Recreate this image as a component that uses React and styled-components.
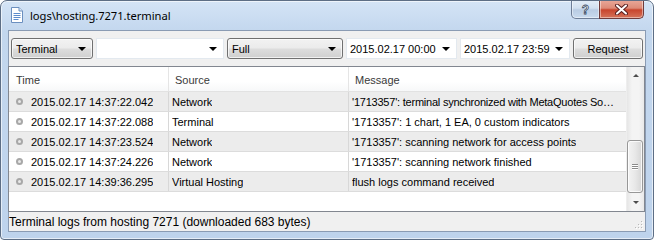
import React from "react";
import styled, { createGlobalStyle } from "styled-components";

const Global = createGlobalStyle`
  html, body { margin: 0; padding: 0; background: #ffffff; }
  body { width: 654px; height: 240px; overflow: hidden; }
`;

const UI = `"Liberation Sans", Arial, sans-serif`;

const Window = styled.div`
  box-sizing: border-box;
  width: 654px;
  height: 240px;
  border: 1px solid #5d6e85;
  border-radius: 7px 7px 4px 4px;
  background: linear-gradient(180deg, #d4e4f6 0px, #c3d7ee 30px, #bed3ec 100%);
  display: flex;
  flex-direction: column;
  overflow: hidden;
  box-shadow: inset 0 0 0 1px rgba(255,255,255,0.6);
`;

const TitleBar = styled.div`
  height: 29px;
  display: flex;
  align-items: flex-start;
  padding-left: 10px;
  padding-right: 9px;
`;

const TitleIcon = styled.svg`
  margin-top: 6px;
  flex: none;
`;

const TitleText = styled.div`
  margin-top: 6px;
  margin-left: 7px;
  font-family: "Noto Sans", "Open Sans", sans-serif;
  font-size: 11.2px;
  line-height: 17px;
  color: #000;
  letter-spacing: -0.05px;
`;

const CaptionButtons = styled.div`
  margin-left: auto;
  display: flex;
  margin-top: -1px;
`;

const CapButton = styled.div`
  box-sizing: border-box;
  width: ${p => p.$w}px;
  height: 19px;
  border: 1px solid ${p => (p.$close ? "#6f3b3b" : "#6d7d96")};
  border-top: none;
  border-radius: ${p => p.$r};
  background: ${p =>
    p.$close
      ? "linear-gradient(180deg, #e9a99a 0%, #dd8b78 45%, #c8452d 55%, #d5735a 100%)"
      : "linear-gradient(180deg, #e4edf7 0%, #d2e0f0 45%, #b9cce3 55%, #c9dbef 100%)"};
  display: flex;
  align-items: center;
  justify-content: center;
  box-shadow: inset 0 0 0 1px rgba(255,255,255,0.45);
  margin-left: ${p => (p.$close ? "-1px" : "0")};
`;

const Client = styled.div`
  flex: 1;
  margin: 0 7px 7px 7px;
  border: 1px solid #8a9bb3;
  background: #f0f0f0;
  display: flex;
  flex-direction: column;
  min-height: 0;
`;

const Toolbar = styled.div`
  display: flex;
  gap: 3px;
  padding: 7px 0 7px 2px;
`;

const Combo = styled.div`
  box-sizing: border-box;
  width: ${p => p.$w}px;
  height: 21px;
  display: flex;
  align-items: center;
  padding: 0 6px 0 ${p => (p.$button ? 4 : 3)}px;
  font-family: ${UI};
  font-size: 11px;
  color: #000;
  border: 1px solid ${p => (p.$button ? "#707070" : "#e3e9ef")};
  border-radius: ${p => (p.$button ? "3px" : "0")};
  background: ${p =>
    p.$button
      ? "linear-gradient(180deg, #f2f2f2 0%, #ebebeb 48%, #dddddd 52%, #cfcfcf 100%)"
      : "#ffffff"};
  box-shadow: ${p => (p.$button ? "inset 0 0 0 1px rgba(255,255,255,0.7)" : "none")};
`;

const ComboText = styled.span`
  flex: 1;
  white-space: nowrap;
  overflow: hidden;
`;

const Arrow = styled.span`
  width: 0;
  height: 0;
  border-left: 4px solid transparent;
  border-right: 4px solid transparent;
  border-top: 4px solid #000;
  flex: none;
`;

const Button = styled.div`
  box-sizing: border-box;
  width: 70px;
  height: 21px;
  display: flex;
  align-items: center;
  justify-content: center;
  font-family: ${UI};
  font-size: 11px;
  color: #000;
  border: 1px solid #707070;
  border-radius: 3px;
  background: linear-gradient(180deg, #f2f2f2 0%, #ebebeb 48%, #dddddd 52%, #cfcfcf 100%);
  box-shadow: inset 0 0 0 1px rgba(255,255,255,0.7);
`;

const List = styled.div`
  height: 146px;
  box-sizing: border-box;
  margin-left: -1px;
  border: 1px solid #828790;
  background: #ffffff;
  display: flex;
`;

const Table = styled.div`
  flex: 1;
  display: flex;
  flex-direction: column;
  min-width: 0;
`;

const COLS = "160px 180px 278px";

const HeaderRow = styled.div`
  display: grid;
  grid-template-columns: ${COLS};
  height: 24px;
  border-bottom: 1px solid #e2e2e2;
  background: linear-gradient(180deg, #ffffff 0%, #ffffff 60%, #f7f8f9 100%);
`;

const HeaderCell = styled.div`
  box-sizing: border-box;
  padding-left: ${p => p.$pl}px;
  padding-top: 2px;
  display: flex;
  align-items: center;
  border-right: 1px solid #e5e5e5;
  font-family: ${UI};
  font-size: 11px;
  color: #3a3a3a;
`;

const Row = styled.div`
  display: grid;
  grid-template-columns: ${COLS};
  height: 20px;
  box-sizing: border-box;
  border-bottom: 1px solid #dcdcdc;
  background: ${p => (p.$alt ? "#ececec" : "#ffffff")};
`;

const Cell = styled.div`
  box-sizing: border-box;
  padding-left: ${p => p.$pl}px;
  padding-right: 1px;
  padding-top: 1px;
  display: flex;
  align-items: center;
  border-right: 1px solid #d8d8d8;
  font-family: ${UI};
  font-size: 11px;
  color: #000;
  white-space: nowrap;
  overflow: hidden;
  min-width: 0;
`;

const CellText = styled.span`
  overflow: hidden;
  text-overflow: ellipsis;
  white-space: nowrap;
  letter-spacing: ${p => (p.$tight ? "-0.22px" : "0")};
`;

const Dot = styled.span`
  box-sizing: border-box;
  width: 7px;
  height: 7px;
  border-radius: 50%;
  border: 2px solid #a8a8a8;
  background: #e8e8e8;
  margin-right: 8px;
  margin-top: -1px;
  flex: none;
`;

const ScrollBar = styled.div`
  width: 17px;
  display: flex;
  flex-direction: column;
  background: linear-gradient(90deg, #e6e6e6 0%, #f4f4f4 30%, #f4f4f4 70%, #e9e9e9 100%);
  border-left: 1px solid #eeeeee;
`;

const ScrollBtn = styled.div`
  height: 17px;
  display: flex;
  align-items: center;
  justify-content: center;
`;

const ScrollArrow = styled.span`
  width: 0;
  height: 0;
  border-left: 3px solid transparent;
  border-right: 3px solid transparent;
  ${p => (p.$up ? "border-bottom: 3px solid #4d4d4d;" : "border-top: 3px solid #4d4d4d;")}
`;

const Track = styled.div`
  flex: 1;
  display: flex;
  flex-direction: column;
  justify-content: flex-end;
  padding-bottom: 1px;
`;

const Thumb = styled.div`
  box-sizing: border-box;
  height: 53px;
  margin: 0 1px 0 0;
  border: 1px solid #979797;
  border-radius: 3px;
  background: linear-gradient(90deg, #f3f3f3 0%, #e8e8e8 50%, #d6d6d6 100%);
  box-shadow: inset 0 0 0 1px rgba(255,255,255,0.8);
  display: flex;
  flex-direction: column;
  align-items: center;
  justify-content: center;
  gap: 1px;
`;

const Grip = styled.span`
  width: 6px;
  height: 1px;
  background: #8a8a8a;
  box-shadow: 0 1px 0 #ffffff;
`;

const StatusBar = styled.div`
  flex: 1;
  display: flex;
  align-items: center;
  justify-content: space-between;
  padding-top: 1px;
  font-family: ${UI};
  font-size: 12px;
  color: #000;
`;

const ResizeGrip = styled.svg`
  align-self: flex-end;
  margin: 0 1px 1px 0;
`;

const rows = [
  ["2015.02.17 14:37:22.042", "Network", "'1713357': terminal synchronized with MetaQuotes So…", true],
  ["2015.02.17 14:37:22.088", "Terminal", "'1713357': 1 chart, 1 EA, 0 custom indicators"],
  ["2015.02.17 14:37:23.524", "Network", "'1713357': scanning network for access points"],
  ["2015.02.17 14:37:24.226", "Network", "'1713357': scanning network finished"],
  ["2015.02.17 14:39:36.295", "Virtual Hosting", "flush logs command received"],
];

export default function App() {
  return (
    <>
      <Global />
      <Window>
        <TitleBar>
          <TitleIcon width="12" height="16" viewBox="0 0 12 16">
            <path d="M0.5 0.5 H8 L11.5 4 V15.5 H0.5 Z" fill="#ffffff" stroke="#6b8fbf" />
            <path d="M8 0.5 V4 H11.5" fill="#dbe6f4" stroke="#6b8fbf" />
            <path d="M2.5 6.5 H9.5 M2.5 8.5 H9.5 M2.5 10.5 H9.5 M2.5 12.5 H7.5" stroke="#5d8ccc" />
          </TitleIcon>
          <TitleText>logs\hosting.7271.terminal</TitleText>
          <CaptionButtons>
            <CapButton $w={29} $r="0 0 0 5px">
              <svg width="9" height="12" viewBox="0 0 9 12">
                <text x="4.5" y="10.5" textAnchor="middle" fontFamily="Liberation Sans, sans-serif" fontSize="12" fontWeight="bold" fill="#ffffff" stroke="#3c4d66" strokeWidth="0.8">?</text>
              </svg>
            </CapButton>
            <CapButton $w={45} $close $r="0 0 5px 0">
              <svg width="13" height="11" viewBox="0 0 13 11">
                <path d="M2 1.5 L11 9.5 M11 1.5 L2 9.5" stroke="#5a2020" strokeWidth="4" strokeLinecap="round" />
                <path d="M2 1.5 L11 9.5 M11 1.5 L2 9.5" stroke="#ffffff" strokeWidth="2" strokeLinecap="round" />
              </svg>
            </CapButton>
          </CaptionButtons>
        </TitleBar>
        <Client>
          <Toolbar>
            <Combo $button $w={82}><ComboText>Terminal</ComboText><Arrow /></Combo>
            <Combo $w={128}><ComboText></ComboText><Arrow /></Combo>
            <Combo $button $w={116}><ComboText>Full</ComboText><Arrow /></Combo>
            <Combo $w={111}><ComboText>2015.02.17 00:00</ComboText><Arrow /></Combo>
            <Combo $w={110}><ComboText>2015.02.17 23:59</ComboText><Arrow /></Combo>
            <Button>Request</Button>
          </Toolbar>
          <List>
            <Table>
              <HeaderRow>
                <HeaderCell $pl={7}>Time</HeaderCell>
                <HeaderCell $pl={6}>Source</HeaderCell>
                <HeaderCell $pl={6}>Message</HeaderCell>
              </HeaderRow>
              {rows.map((r, i) => (
                <Row key={i} $alt={i % 2 === 0}>
                  <Cell $pl={7}><Dot /><CellText>{r[0]}</CellText></Cell>
                  <Cell $pl={3}><CellText>{r[1]}</CellText></Cell>
                  <Cell $pl={3}><CellText $tight={r[3]}>{r[2]}</CellText></Cell>
                </Row>
              ))}
            </Table>
            <ScrollBar>
              <ScrollBtn><ScrollArrow $up /></ScrollBtn>
              <Track>
                <Thumb><Grip /><Grip /><Grip /></Thumb>
              </Track>
              <ScrollBtn><ScrollArrow /></ScrollBtn>
            </ScrollBar>
          </List>
          <StatusBar>
            <span>Terminal logs from hosting 7271 (downloaded 683 bytes)</span>
            <ResizeGrip width="10" height="10" viewBox="0 0 10 10">
              {[[8, 2], [5, 5], [8, 5], [2, 8], [5, 8], [8, 8]].map(([x, y], i) => (
                <g key={i}>
                  <rect x={x} y={y} width="1" height="1" fill="#ffffff" />
                  <rect x={x - 1} y={y - 1} width="1" height="1" fill="#b8b8b8" />
                </g>
              ))}
            </ResizeGrip>
          </StatusBar>
        </Client>
      </Window>
    </>
  );
}
